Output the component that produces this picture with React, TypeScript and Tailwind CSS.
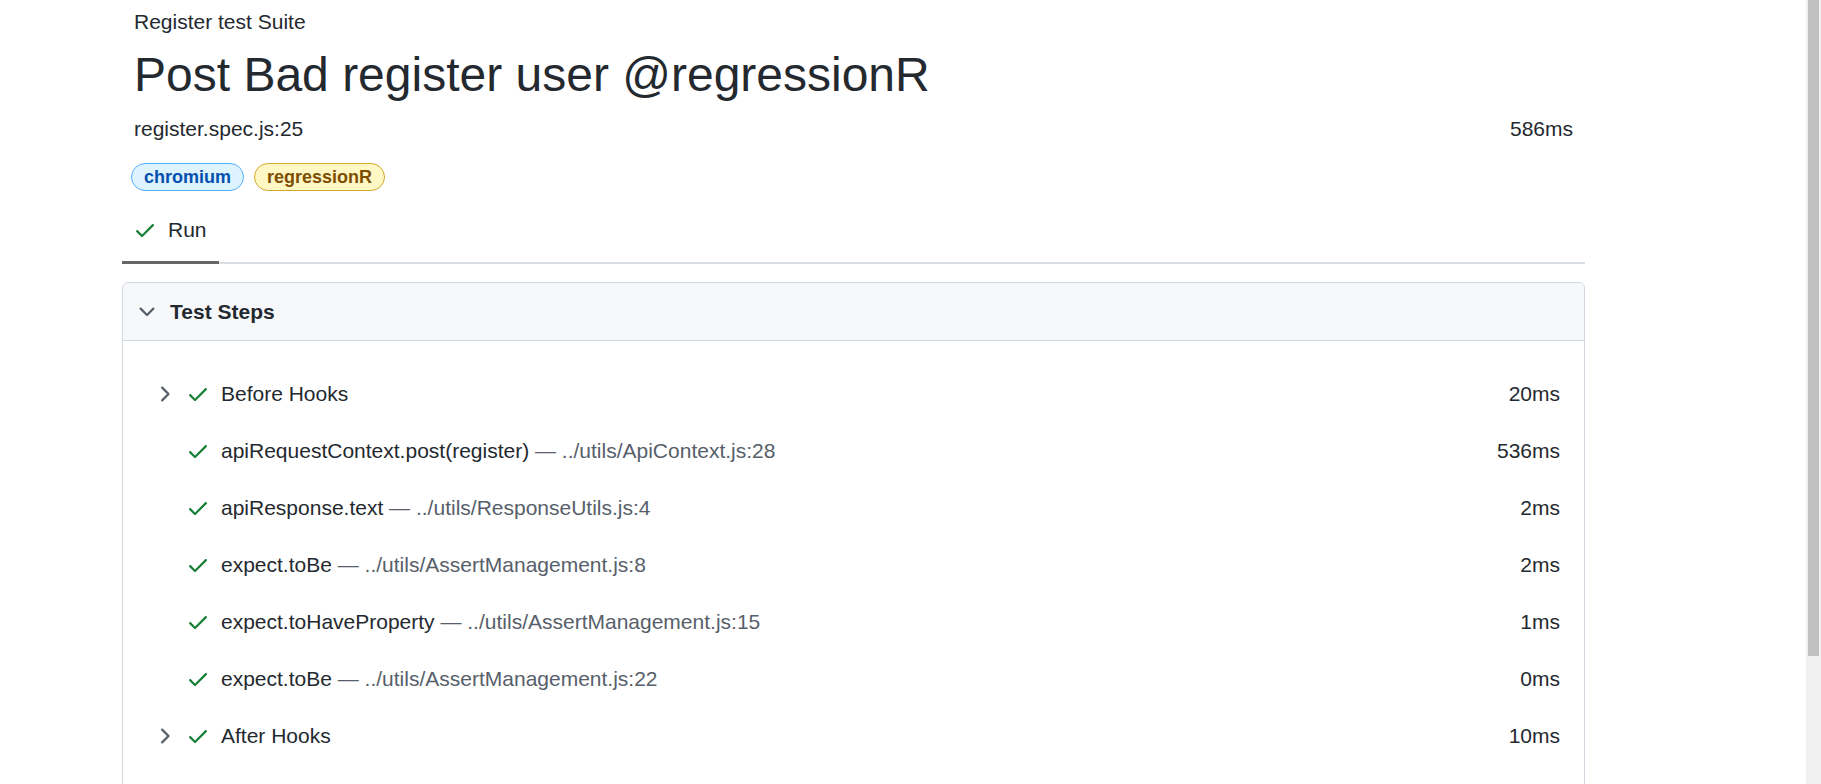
import React from "react";

interface Step {
  title: string;
  location?: string;
  duration: string;
  expandable?: boolean;
}

const steps: Step[] = [
  { title: "Before Hooks", duration: "20ms", expandable: true },
  {
    title: "apiRequestContext.post(register)",
    location: "../utils/ApiContext.js:28",
    duration: "536ms",
  },
  {
    title: "apiResponse.text",
    location: "../utils/ResponseUtils.js:4",
    duration: "2ms",
  },
  {
    title: "expect.toBe",
    location: "../utils/AssertManagement.js:8",
    duration: "2ms",
  },
  {
    title: "expect.toHaveProperty",
    location: "../utils/AssertManagement.js:15",
    duration: "1ms",
  },
  {
    title: "expect.toBe",
    location: "../utils/AssertManagement.js:22",
    duration: "0ms",
  },
  { title: "After Hooks", duration: "10ms", expandable: true },
];

function CheckIcon() {
  return (
    <svg viewBox="0 0 16 16" width="24" height="24" className="shrink-0 fill-[#1a7f37]">
      <path d="M13.78 4.22a.75.75 0 0 1 0 1.06l-7.25 7.25a.75.75 0 0 1-1.06 0L2.22 9.28a.751.751 0 0 1 .018-1.042.751.751 0 0 1 1.042-.018L6 10.94l6.72-6.72a.75.75 0 0 1 1.06 0Z" />
    </svg>
  );
}

function ChevronRight() {
  return (
    <svg viewBox="0 0 16 16" width="24" height="24" className="shrink-0 fill-[#57606a]">
      <path d="M6.22 3.22a.75.75 0 0 1 1.06 0l4.25 4.25a.75.75 0 0 1 0 1.06l-4.25 4.25a.751.751 0 0 1-1.042-.018.751.751 0 0 1-.018-1.042L9.94 8 6.22 4.28a.75.75 0 0 1 0-1.06Z" />
    </svg>
  );
}

function ChevronDown() {
  return (
    <svg viewBox="0 0 16 16" width="24" height="24" className="shrink-0 fill-[#57606a]">
      <path d="M12.78 5.22a.749.749 0 0 1 0 1.06l-4.25 4.25a.749.749 0 0 1-1.06 0L3.22 6.28a.749.749 0 1 1 1.06-1.06L8 8.939l3.72-3.719a.749.749 0 0 1 1.06 0Z" />
    </svg>
  );
}

export default function App() {
  return (
    <div className="flex h-[784px] w-full overflow-hidden bg-white font-['Liberation_Sans',Arial,sans-serif] text-[#24292f]">
      <div className="flex-1 min-w-0">
        <div className="ml-[122px] w-[1463px]">
          <div className="px-[12px] pt-[10px] text-[21px] leading-[24px]">
            Register test Suite
          </div>
          <h1 className="mt-[13px] px-[12px] text-[48px] leading-[56px] font-normal">
            Post Bad register user @regressionR
          </h1>
          <div className="mt-[14px] flex justify-between px-[12px] text-[21px] leading-[24px]">
            <span>register.spec.js:25</span>
            <span>586ms</span>
          </div>

          <div className="mt-[22px] flex gap-[10px] pl-[9px]">
            <span className="h-[28px] rounded-full border border-[#54aeff] bg-[#ddf4ff] px-[12px] text-[18px] leading-[26px] font-bold text-[#0550ae]">
              chromium
            </span>
            <span className="h-[28px] rounded-full border border-[#d4a72c] bg-[#fff8c5] px-[12px] text-[18px] leading-[26px] font-bold text-[#7d4e00]">
              regressionR
            </span>
          </div>

          <div className="mt-[7px] flex border-b-2 border-[#d8dee4]">
            <div className="-mb-[2px] flex h-[66px] items-center gap-[11px] border-b-[3px] border-[#666666] pl-[11px] pr-[12px] text-[21px]">
              <CheckIcon />
              <span>Run</span>
            </div>
          </div>

          <div className="mt-[18px] rounded-[6px] border border-[#d0d7de]">
            <div className="flex h-[58px] items-center gap-[11px] rounded-t-[6px] border-b border-[#d0d7de] bg-[#f6f8fa] pl-[12px] text-[21px] font-bold">
              <ChevronDown />
              <span>Test Steps</span>
            </div>
            <div className="pt-[24px] pb-[24px]">
              {steps.map((step, i) => (
                <div
                  key={i}
                  className="flex h-[57px] items-center pl-[29px] pr-[24px] text-[21px]"
                >
                  {step.expandable ? <ChevronRight /> : <span className="w-[24px] shrink-0" />}
                  <span className="ml-[10px]">
                    <CheckIcon />
                  </span>
                  <span className="ml-[11px] flex-1 whitespace-nowrap">
                    {step.title}
                    {step.location && (
                      <span className="text-[#57606a]"> — {step.location}</span>
                    )}
                  </span>
                  <span>{step.duration}</span>
                </div>
              ))}
            </div>
          </div>
        </div>
      </div>
      <div className="w-[15px] shrink-0 bg-[#f1f1f1] pl-[2px] pr-[2px]">
        <div className="h-[656px] w-[11px] bg-[#c1c1c1]" />
      </div>
    </div>
  );
}
